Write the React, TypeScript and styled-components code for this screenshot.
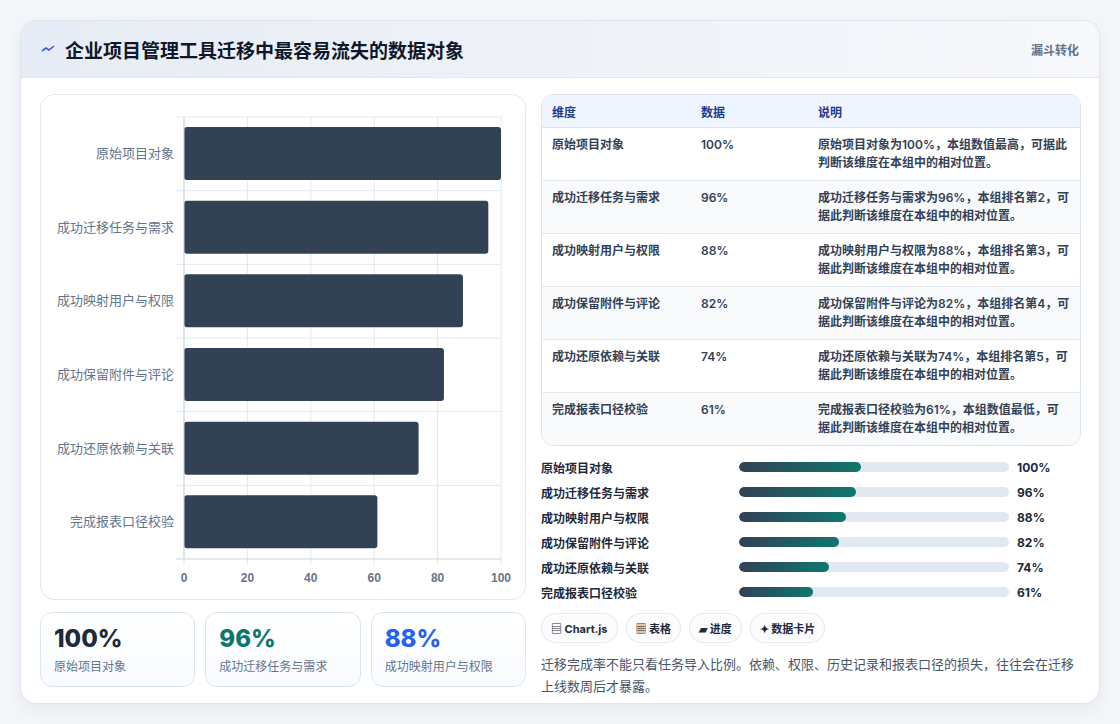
import React from 'react';
import styled, { createGlobalStyle } from 'styled-components';

const rows = [
  { name: '原始项目对象', v: 100, note: '原始项目对象为100%，本组数值最高，可据此判断该维度在本组中的相对位置。' },
  { name: '成功迁移任务与需求', v: 96, note: '成功迁移任务与需求为96%，本组排名第2，可据此判断该维度在本组中的相对位置。' },
  { name: '成功映射用户与权限', v: 88, note: '成功映射用户与权限为88%，本组排名第3，可据此判断该维度在本组中的相对位置。' },
  { name: '成功保留附件与评论', v: 82, note: '成功保留附件与评论为82%，本组排名第4，可据此判断该维度在本组中的相对位置。' },
  { name: '成功还原依赖与关联', v: 74, note: '成功还原依赖与关联为74%，本组排名第5，可据此判断该维度在本组中的相对位置。' },
  { name: '完成报表口径校验', v: 61, note: '完成报表口径校验为61%，本组数值最低，可据此判断该维度在本组中的相对位置。' },
];

const Global = createGlobalStyle`
  body { margin: 0; background: #f4f6f9; font-family: Inter, "Noto Sans CJK SC", sans-serif; color: #1e293b; }
`;

const Page = styled.div`
  padding: 20px;
  height: 724px;
  box-sizing: border-box;
`;

const Card = styled.div`
  background: #fff;
  border: 1px solid #dfe5ee;
  border-radius: 16px;
  overflow: hidden;
  box-shadow: 0 6px 20px rgba(15, 23, 42, 0.06);
  height: 684px;
  box-sizing: border-box;
`;

const Header = styled.div`
  height: 56px;
  display: flex;
  align-items: center;
  justify-content: space-between;
  padding: 0 20px;
  background: linear-gradient(90deg, #e6ecf5, #f6f8fb);
  border-bottom: 1px solid #e3e8ef;
`;

const Title = styled.h1`
  margin: 0;
  font-size: 19px;
  font-weight: 700;
  color: #0f172a;
  display: flex;
  align-items: center;
  gap: 10px;
`;

const Tag = styled.span`
  font-size: 12px;
  font-weight: 700;
  color: #64748b;
`;

const Body = styled.div`
  display: grid;
  grid-template-columns: 486px 540px;
  gap: 15px;
  padding: 16px 19px 0 19px;
`;

const Col = styled.div`
  display: flex;
  flex-direction: column;
`;

const ChartBox = styled.div`
  border: 1px solid #e3e8ef;
  border-radius: 14px;
  height: 506px;
  box-sizing: border-box;
  overflow: hidden;
`;

const Stats = styled.div`
  display: grid;
  grid-template-columns: repeat(3, 1fr);
  gap: 10px;
  margin-top: 12px;
`;

const Stat = styled.div`
  border: 1px solid #dbe6f3;
  border-radius: 12px;
  height: 75px;
  box-sizing: border-box;
  padding: 12px 13px;
  background: linear-gradient(180deg, #fff, #f8fbff);
`;

const StatNum = styled.div<{ $c: string }>`
  font-size: 24px;
  font-weight: 800;
  color: ${(p) => p.$c};
  line-height: 28px;
`;

const StatLabel = styled.div`
  font-size: 12px;
  color: #64748b;
  margin-top: 4px;
`;

const Table = styled.table`
  width: 100%;
  border-collapse: separate;
  border-spacing: 0;
  border: 1px solid #dbe3ee;
  border-radius: 12px;
  overflow: hidden;
  font-size: 12px;
`;

const Th = styled.th<{ $w?: number }>`
  text-align: left;
  font-weight: 700;
  color: #1e3a8a;
  background: #eef5ff;
  padding: 0 10px;
  height: 32px;
  width: ${(p) => (p.$w ? `${p.$w}px` : 'auto')};
  border-bottom: 1px solid #dbe3ee;
`;

const Td = styled.td<{ $last?: boolean }>`
  padding: 8px 10px;
  height: 36px;
  vertical-align: top;
  line-height: 18px;
  font-weight: 600;
  color: #334155;
  border-bottom: ${(p) => (p.$last ? 'none' : '1px solid #e5e9f0')};
`;

const Tr = styled.tr<{ $alt: boolean }>`
  background: ${(p) => (p.$alt ? '#f8fafc' : '#fff')};
`;

const Bars = styled.div`
  display: flex;
  flex-direction: column;
  gap: 7px;
  margin-top: 12px;
`;

const BarRow = styled.div`
  display: grid;
  grid-template-columns: 198px 270px 1fr;
  align-items: center;
  height: 18px;
  font-size: 12px;
  font-weight: 600;
  color: #1e293b;
`;

const Track = styled.div`
  height: 10px;
  border-radius: 5px;
  background: #e2e8f0;
  overflow: hidden;
`;

const Fill = styled.div`
  height: 100%;
  border-radius: 5px;
  background: linear-gradient(90deg, #334155, #0f766e);
`;

const Val = styled.span`
  padding-left: 8px;
  font-weight: 700;
`;

const Chips = styled.div`
  display: flex;
  gap: 8px;
  margin-top: 12px;
`;

const Chip = styled.span`
  border: 1px solid #e2e8f0;
  border-radius: 14px;
  height: 28px;
  padding: 0 9px;
  display: inline-flex;
  align-items: center;
  gap: 4px;
  font-size: 11px;
  font-weight: 700;
  color: #1e293b;
  background: #fbfcfe;
`;

const Note = styled.p`
  margin: 10px 0 0;
  font-size: 13px;
  line-height: 22px;
  color: #475569;
`;

const Chart = () => {
  const L = 143, R = 460, T = 22, B = 464;
  const band = (B - T) / 6;
  return (
    <svg width="486" height="506" style={{ display: 'block' }}>
      {[0, 20, 40, 60, 80, 100].map((t) => {
        const x = L + ((R - L) * t) / 100;
        return (
          <g key={t}>
            <line x1={x} y1={T} x2={x} y2={B + 6} stroke="#e2e8f0" />
            <text x={x} y={B + 23} fontSize="12" fontWeight="700" fill="#64748b" textAnchor="middle" fontFamily="Liberation Sans, sans-serif">{t}</text>
          </g>
        );
      })}
      {rows.map((r, i) => {
        const y = T + band * i;
        return (
          <g key={r.name}>
            <line x1={L - 8} y1={y} x2={R} y2={y} stroke="#e2e8f0" />
            <rect x={L} y={y + 10} width={((R - L) * r.v) / 100} height={53} rx={3} fill="#334155" />
            <text x={L - 10} y={y + band / 2 + 4} fontSize="13" fill="#64748b" textAnchor="end">{r.name}</text>
          </g>
        );
      })}
      <line x1={L - 8} y1={B} x2={R} y2={B} stroke="#cbd5e1" />
      <line x1={L} y1={T} x2={L} y2={B} stroke="#cbd5e1" />
    </svg>
  );
};

export default function App() {
  return (
    <Page>
      <Global />
      <Card>
        <Header>
          <Title>
            <svg width="14" height="10" viewBox="0 0 14 10"><path d="M1 7 L5 4 L8 6 L13 2" stroke="#3b5bdb" strokeWidth="1.6" fill="none" /></svg>
            企业项目管理工具迁移中最容易流失的数据对象
          </Title>
          <Tag>漏斗转化</Tag>
        </Header>
        <Body>
          <Col>
            <ChartBox><Chart /></ChartBox>
            <Stats>
              <Stat><StatNum $c="#1e293b">100%</StatNum><StatLabel>原始项目对象</StatLabel></Stat>
              <Stat><StatNum $c="#0f766e">96%</StatNum><StatLabel>成功迁移任务与需求</StatLabel></Stat>
              <Stat><StatNum $c="#2563eb">88%</StatNum><StatLabel>成功映射用户与权限</StatLabel></Stat>
            </Stats>
          </Col>
          <Col>
            <Table>
              <thead>
                <tr><Th $w={129}>维度</Th><Th $w={97}>数据</Th><Th>说明</Th></tr>
              </thead>
              <tbody>
                {rows.map((r, i) => (
                  <Tr key={r.name} $alt={i % 2 === 1}>
                    <Td $last={i === 5}>{r.name}</Td>
                    <Td $last={i === 5}>{r.v}%</Td>
                    <Td $last={i === 5}>{r.note}</Td>
                  </Tr>
                ))}
              </tbody>
            </Table>
            <Bars>
              {rows.map((r) => (
                <BarRow key={r.name}>
                  <span>{r.name}</span>
                  <Track><Fill style={{ width: `${r.v * 0.45}%` }} /></Track>
                  <Val>{r.v}%</Val>
                </BarRow>
              ))}
            </Bars>
            <Chips>
              <Chip>▤ Chart.js</Chip>
              <Chip>▦ 表格</Chip>
              <Chip>▰ 进度</Chip>
              <Chip>✦ 数据卡片</Chip>
            </Chips>
            <Note>迁移完成率不能只看任务导入比例。依赖、权限、历史记录和报表口径的损失，往往会在迁移上线数周后才暴露。</Note>
          </Col>
        </Body>
      </Card>
    </Page>
  );
}
